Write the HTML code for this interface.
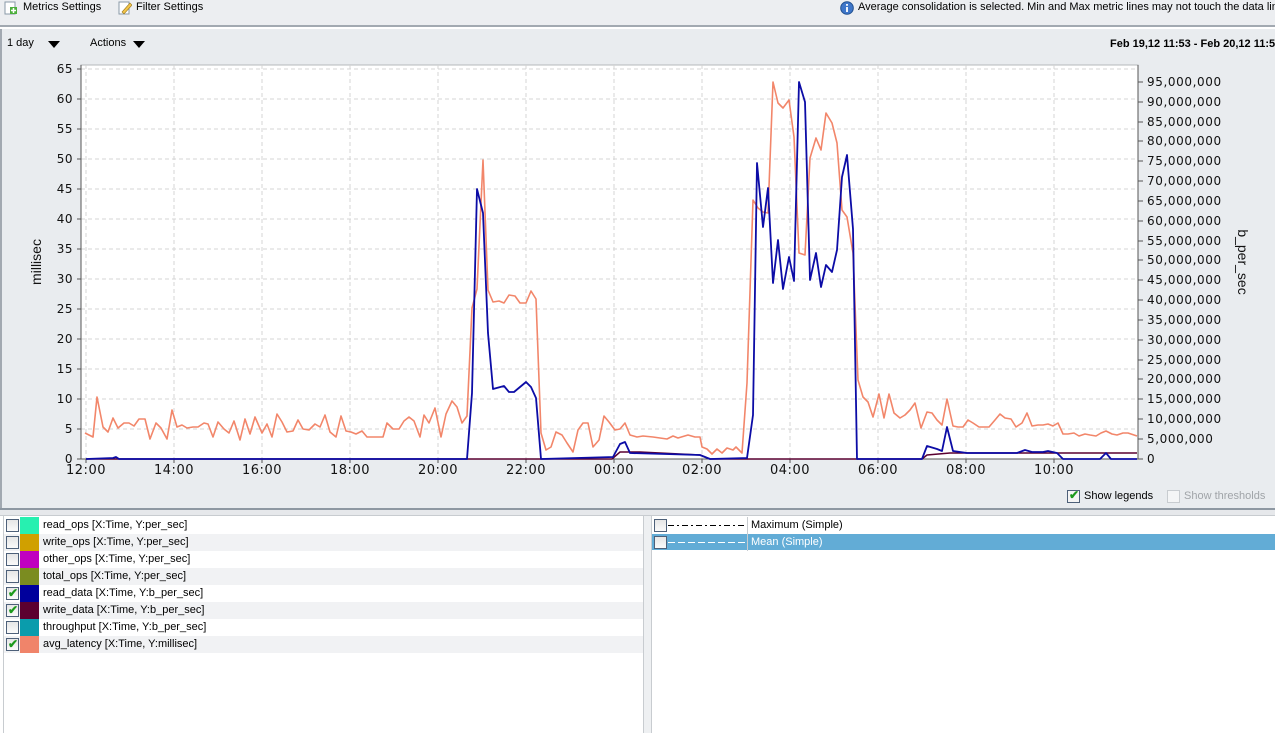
<!DOCTYPE html>
<html><head><meta charset="utf-8"><style>
*{margin:0;padding:0;box-sizing:border-box}
body{width:1275px;height:733px;overflow:hidden;background:#fff;font-family:"Liberation Sans",Arial,sans-serif;font-size:12px;color:#000;position:relative}
.abs{position:absolute}
.row{position:absolute;left:4px;width:639px;height:17px;font-size:11px;line-height:17px}
.cb{position:absolute;left:2px;top:2px;width:13px;height:13px;border:1px solid #4d6079;background:linear-gradient(#e6e6e6,#fafafa)}
.sw{position:absolute;left:16px;top:0;width:19px;height:17px}
.tx{position:absolute;left:39px;top:0}
.ck{position:absolute;left:1px;top:-3px;color:#1c9a1c;font-size:12px;font-weight:bold}
.tri{position:absolute;width:0;height:0;border-left:6px solid transparent;border-right:6px solid transparent;border-top:7px solid #000}
</style></head><body>
<!-- toolbar -->
<div class="abs" style="left:0;top:0;width:1275px;height:27px;background:#eceef1;border-bottom:2px solid #a2a9b1"></div>
<svg class="abs" style="left:4px;top:1px" width="14" height="14"><rect x="1" y="1" width="10" height="12" fill="#fff" stroke="#8a9aa8"/><rect x="6" y="6" width="7" height="7" fill="#4caf3c"/><path d="M9.5 7v5M7 9.5h5" stroke="#fff" stroke-width="1.5"/></svg>
<div class="abs" style="left:23px;top:1px;font-size:11px">Metrics Settings</div>
<svg class="abs" style="left:118px;top:0" width="14" height="15"><rect x="1" y="2" width="10" height="12" fill="#fff" stroke="#8a9aa8"/><path d="M4 12l8-9 2 2-8 9z" fill="#f3c54a" stroke="#9a7a20" stroke-width=".6"/></svg>
<div class="abs" style="left:136px;top:1px;font-size:11px">Filter Settings</div>
<svg class="abs" style="left:840px;top:1px" width="14" height="14"><circle cx="7" cy="7" r="6.3" fill="#3e76c9" stroke="#21508f"/><rect x="6.1" y="6" width="1.8" height="5" fill="#fff"/><rect x="6.1" y="3" width="1.8" height="1.8" fill="#fff"/></svg>
<div class="abs" style="left:858px;top:1px;font-size:11px;white-space:nowrap">Average consolidation is selected. Min and Max metric lines may not touch the data line</div>
<!-- chart panel -->
<div class="abs" style="left:0;top:29px;width:1275px;height:480px;background:#e9ecef;border-left:2px solid #a2a9b1"></div>
<div class="abs" style="left:7px;top:37px;font-size:11px">1 day</div>
<div class="tri" style="left:48px;top:41px"></div>
<div class="abs" style="left:90px;top:37px;font-size:11px">Actions</div>
<div class="tri" style="left:133px;top:41px"></div>
<div class="abs" style="left:1110px;top:38px;font-size:11px;font-weight:bold;white-space:nowrap">Feb 19,12 11:53 - Feb 20,12 11:53</div>
<svg class="abs" style="left:0;top:0" width="1275" height="510" font-family="DejaVu Sans,sans-serif" font-size="12">
<rect x="81" y="65" width="1057" height="394" fill="#fff" stroke="#b5b8bb"/>
<g stroke="#d4d4d4" stroke-dasharray="4,3" fill="none">
<path d="M81 69H1138M81 99H1138M81 129H1138M81 159H1138M81 189H1138M81 219H1138M81 249H1138M81 279H1138M81 309H1138M81 339H1138M81 369H1138M81 399H1138M81 429H1138"/>
<path d="M86 65V459M174 65V459M262 65V459M350 65V459M438 65V459M526 65V459M614 65V459M702 65V459M790 65V459M878 65V459M966 65V459M1054 65V459"/>
</g>
<g stroke="#555" fill="none"><path d="M81 65V459H1138V65"/>
<path d="M77 69h4M77 99h4M77 129h4M77 159h4M77 189h4M77 219h4M77 249h4M77 279h4M77 309h4M77 339h4M77 369h4M77 399h4M77 429h4M77 459h4"/>
<path d="M1138 82h5M1138 102h5M1138 122h5M1138 141h5M1138 161h5M1138 181h5M1138 201h5M1138 221h5M1138 241h5M1138 260h5M1138 280h5M1138 300h5M1138 320h5M1138 340h5M1138 360h5M1138 379h5M1138 399h5M1138 419h5M1138 439h5M1138 459h5"/>
<path d="M86 459v4M174 459v4M262 459v4M350 459v4M438 459v4M526 459v4M614 459v4M702 459v4M790 459v4M878 459v4M966 459v4M1054 459v4"/></g>
<g text-anchor="end" fill="#111" letter-spacing="0.5">
<text x="73" y="73">65</text><text x="73" y="103">60</text><text x="73" y="133">55</text><text x="73" y="163">50</text><text x="73" y="193">45</text><text x="73" y="223">40</text><text x="73" y="253">35</text><text x="73" y="283">30</text><text x="73" y="313">25</text><text x="73" y="343">20</text><text x="73" y="373">15</text><text x="73" y="403">10</text><text x="73" y="433">5</text><text x="73" y="463">0</text></g>
<g fill="#111" letter-spacing="0.6">
<text x="1147" y="86">95,000,000</text><text x="1147" y="106">90,000,000</text><text x="1147" y="126">85,000,000</text><text x="1147" y="145">80,000,000</text><text x="1147" y="165">75,000,000</text><text x="1147" y="185">70,000,000</text><text x="1147" y="205">65,000,000</text><text x="1147" y="225">60,000,000</text><text x="1147" y="245">55,000,000</text><text x="1147" y="264">50,000,000</text><text x="1147" y="284">45,000,000</text><text x="1147" y="304">40,000,000</text><text x="1147" y="324">35,000,000</text><text x="1147" y="344">30,000,000</text><text x="1147" y="364">25,000,000</text><text x="1147" y="383">20,000,000</text><text x="1147" y="403">15,000,000</text><text x="1147" y="423">10,000,000</text><text x="1147" y="443">5,000,000</text><text x="1147" y="463">0</text></g>
<g text-anchor="middle" fill="#111" font-size="13" letter-spacing="0.5">
<text x="86" y="474">12:00</text><text x="174" y="474">14:00</text><text x="262" y="474">16:00</text><text x="350" y="474">18:00</text><text x="438" y="474">20:00</text><text x="526" y="474">22:00</text><text x="614" y="474">00:00</text><text x="702" y="474">02:00</text><text x="790" y="474">04:00</text><text x="878" y="474">06:00</text><text x="966" y="474">08:00</text><text x="1054" y="474">10:00</text></g>
<text transform="translate(41,262) rotate(-90)" text-anchor="middle" font-family="Liberation Sans,sans-serif" font-size="14" fill="#111">millisec</text>
<text transform="translate(1238,262) rotate(90)" text-anchor="middle" font-family="Liberation Sans,sans-serif" font-size="14" fill="#111">b_per_sec</text>
<polyline fill="none" stroke="#5a0030" stroke-width="1.5" points="86,459 612,459 620,452 640,452 660,453 700,455 710,459 922,459 927,455 950,453 1137,453"/>
<polyline fill="none" stroke="#f2866a" stroke-width="1.6" stroke-linejoin="round" points="85,433 93,437 97,397 103,427 108,432 113,418 118,428 124,423 129,423 134,426 139,419 145,419 150,439 156,423 161,428 167,439 172,410 177,427 182,425 187,428 193,427 198,427 204,423 208,424 213,437 218,422 224,429 229,433 234,421 240,440 245,419 250,434 255,417 262,433 267,424 272,437 277,414 282,422 287,432 293,431 298,420 303,429 309,430 315,424 320,427 325,415 330,432 336,437 341,416 346,431 351,432 356,434 362,431 367,437 373,437 378,437 383,437 387,423 393,429 399,429 404,421 409,417 414,421 420,437 424,415 429,423 435,408 441,437 446,414 452,401 457,407 462,423 467,416 472,308 477,289 483,160 488,290 493,302 499,301 504,303 509,295 515,296 520,303 526,303 531,291 536,299 541,433 546,450 551,447 556,432 562,435 567,443 573,452 578,430 583,423 588,423 593,447 599,440 604,416 609,422 615,430 620,429 625,423 630,435 637,437 643,436 653,437 667,439 673,436 678,438 688,435 695,437 700,437 702,447 707,449 712,454 717,449 722,453 727,448 733,450 736,447 742,453 747,383 753,200 758,208 763,212 768,213 773,82 778,103 783,108 789,100 794,137 799,253 805,255 810,158 816,138 821,150 826,113 832,123 837,143 842,210 847,217 853,253 858,380 863,397 868,402 873,417 879,394 884,418 889,394 894,413 900,418 905,415 910,410 915,403 921,428 927,412 932,413 937,420 942,425 947,399 953,426 958,427 963,427 968,420 973,423 979,427 984,427 989,427 995,420 1000,414 1005,418 1011,419 1016,427 1022,423 1027,413 1032,426 1038,425 1043,425 1048,424 1053,426 1058,423 1063,434 1068,434 1074,433 1079,436 1085,434 1090,435 1096,436 1101,433 1106,431 1112,434 1117,435 1123,433 1128,433 1134,435 1137,436"/>
<polyline fill="none" stroke="#0c0ca6" stroke-width="1.8" stroke-linejoin="round" points="86,459 113,458 116,457 119,459 467,459 472,393 477,189 483,213 488,333 493,389 504,386 509,392 514,392 526,382 531,387 536,398 541,459 613,457 620,444 625,442 630,453 700,455 710,459 747,458 753,415 757,163 763,227 768,188 773,283 778,240 783,289 789,257 794,281 799,82 805,102 810,280 816,253 821,287 826,265 832,272 837,250 842,177 847,155 853,229 857,459 922,459 927,446 937,449 942,451 947,427 953,451 960,452 967,453 1017,453 1025,450 1032,452 1043,452 1048,451 1057,453 1063,459 1100,459 1106,453 1111,459 1137,459"/>
</svg>
<div class="abs" style="left:1067px;top:490px;width:13px;height:13px;border:1px solid #4d6079;background:#f4f4f4"><span style="position:absolute;left:1px;top:-3px;color:#1c9a1c;font-size:12px;font-weight:bold">&#10004;</span></div>
<div class="abs" style="left:1084px;top:490px;font-size:11px">Show legends</div>
<div class="abs" style="left:1167px;top:490px;width:13px;height:13px;border:1px solid #c8ccd0;background:#f4f5f6"></div>
<div class="abs" style="left:1184px;top:490px;font-size:11px;color:#a0a4a8">Show thresholds</div>
<!-- split -->
<div class="abs" style="left:0;top:508px;width:1275px;height:2px;background:#8e98a2"></div>
<div class="abs" style="left:0;top:510px;width:1275px;height:6px;background:#e6e8eb;border-bottom:1px solid #c8ccd0"></div>
<div class="abs" style="left:3px;top:516px;width:1px;height:217px;background:#c8ccd0"></div>
<div class="abs" style="left:643px;top:516px;width:9px;height:217px;background:#eef0f2;border-left:1px solid #c8ccd0;border-right:1px solid #c8ccd0"></div>
<div class="row" style="top:517px;background:#fff"><div class="cb"></div><div class="sw" style="background:#27f0b0"></div><div class="tx">read_ops [X:Time, Y:per_sec]</div></div>
<div class="row" style="top:534px;background:#f1f2f4"><div class="cb"></div><div class="sw" style="background:#d0a000"></div><div class="tx">write_ops [X:Time, Y:per_sec]</div></div>
<div class="row" style="top:551px;background:#fff"><div class="cb"></div><div class="sw" style="background:#c000c0"></div><div class="tx">other_ops [X:Time, Y:per_sec]</div></div>
<div class="row" style="top:568px;background:#f1f2f4"><div class="cb"></div><div class="sw" style="background:#7b8c20"></div><div class="tx">total_ops [X:Time, Y:per_sec]</div></div>
<div class="row" style="top:585px;background:#fff"><div class="cb"><span class="ck">&#10004;</span></div><div class="sw" style="background:#00009c"></div><div class="tx">read_data [X:Time, Y:b_per_sec]</div></div>
<div class="row" style="top:602px;background:#f1f2f4"><div class="cb"><span class="ck">&#10004;</span></div><div class="sw" style="background:#5c0030"></div><div class="tx">write_data [X:Time, Y:b_per_sec]</div></div>
<div class="row" style="top:619px;background:#fff"><div class="cb"></div><div class="sw" style="background:#0a9cac"></div><div class="tx">throughput [X:Time, Y:b_per_sec]</div></div>
<div class="row" style="top:636px;background:#f1f2f4"><div class="cb"><span class="ck">&#10004;</span></div><div class="sw" style="background:#f0846a"></div><div class="tx">avg_latency [X:Time, Y:millisec]</div></div>
<!-- right list -->
<div class="abs" style="left:652px;top:517px;width:623px;height:17px;background:#fff"></div>
<div class="abs" style="left:652px;top:534px;width:623px;height:16px;background:#62acd6"></div>
<div class="abs" style="left:654px;top:519px;width:13px;height:13px;border:1px solid #4d6079;background:linear-gradient(#e6e6e6,#fafafa)"></div>
<div class="abs" style="left:654px;top:536px;width:13px;height:13px;border:1px solid #4d6079;background:linear-gradient(#e6e6e6,#fafafa)"></div>
<svg class="abs" style="left:667px;top:517px" width="82" height="34"><path d="M1 8.5h80" stroke="#000" stroke-dasharray="6,3,2,3"/><path d="M1 25.5h80" stroke="#fff" stroke-dasharray="7,3"/><path d="M80.5 0v34" stroke="#c8ccd0"/></svg>
<div class="abs" style="left:751px;top:519px;font-size:11px">Maximum (Simple)</div>
<div class="abs" style="left:751px;top:536px;font-size:11px;color:#fff">Mean (Simple)</div>
</body></html>
